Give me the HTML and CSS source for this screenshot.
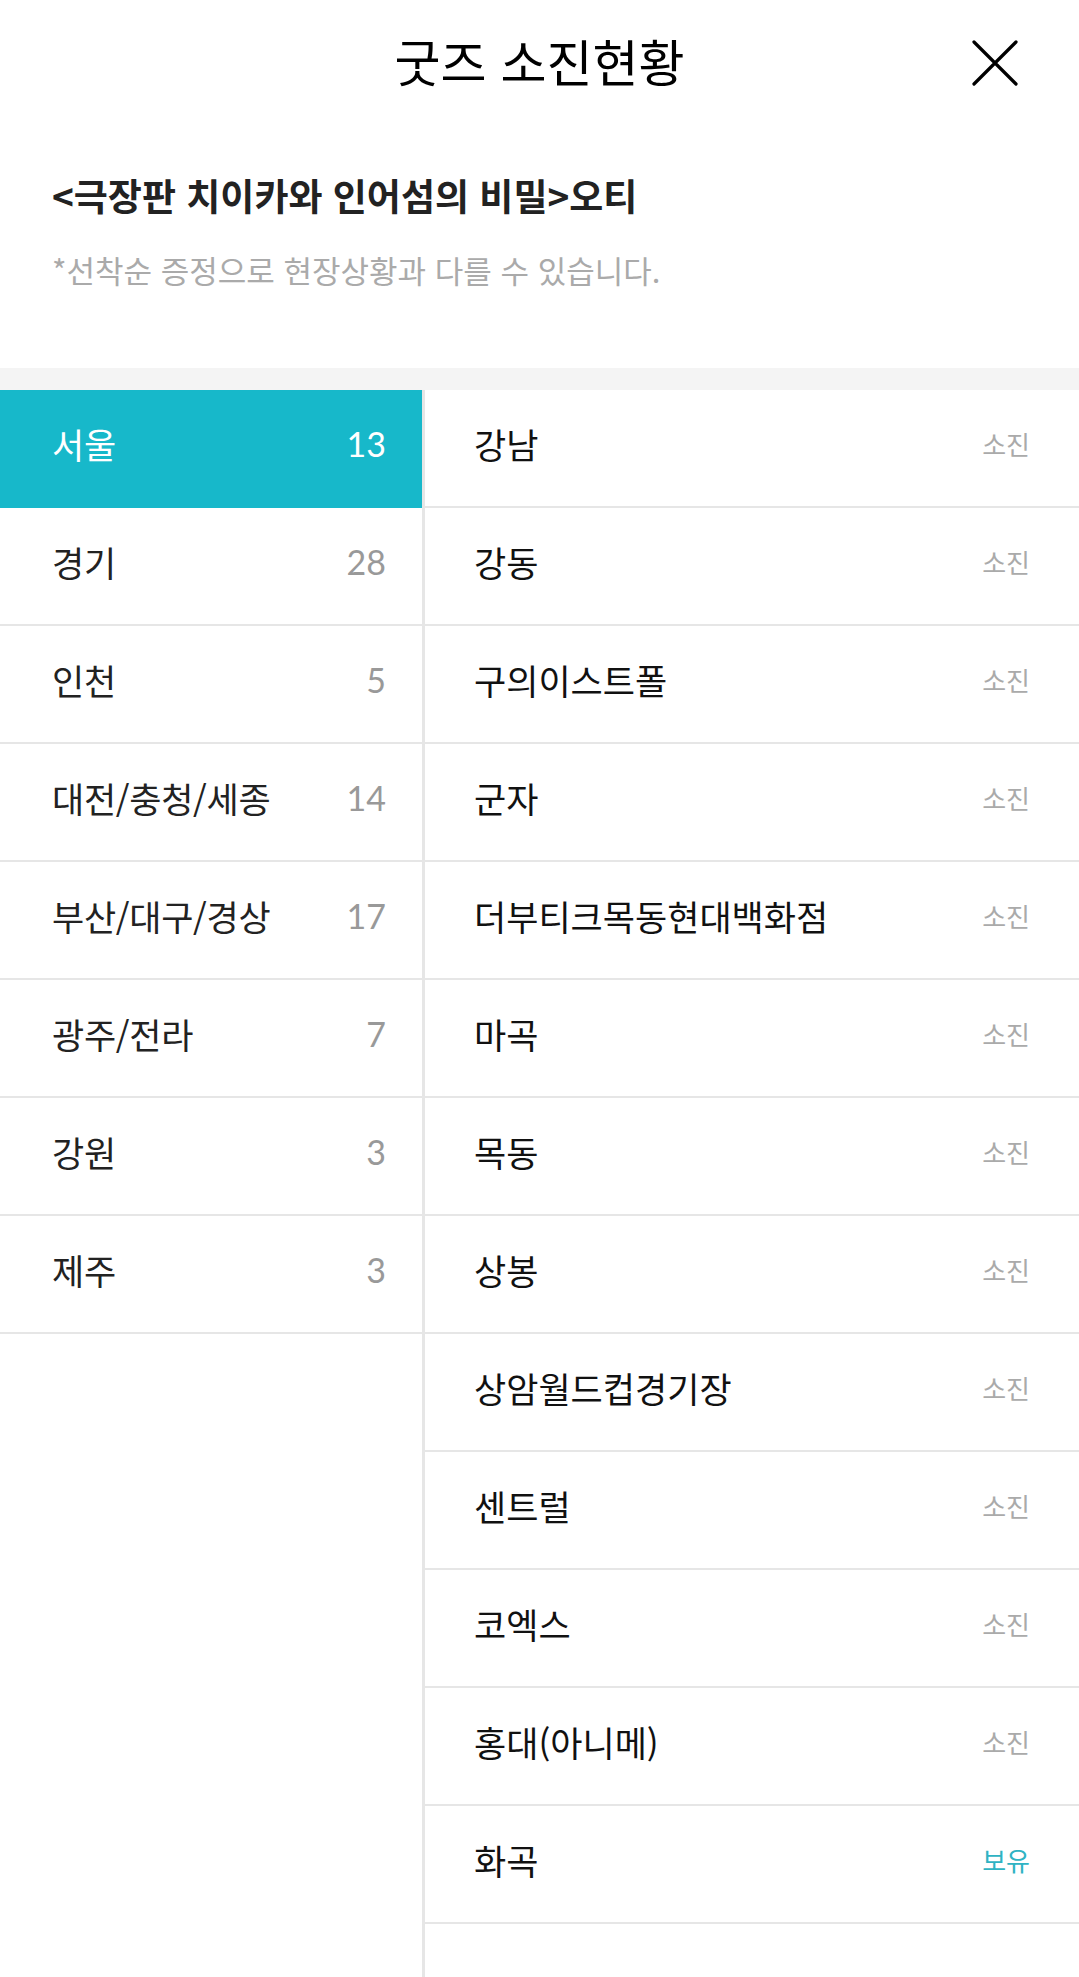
FILE: index.html
```html
<!DOCTYPE html>
<html lang="ko">
<head>
<meta charset="utf-8">
<title>굿즈 소진현황</title>
<link rel="stylesheet" href="styles.css">
</head>
<body>
<div class="page">
  <header class="header">
    <h1 class="title">굿즈 소진현황</h1>
    <button class="close" aria-label="닫기">
      <svg width="48" height="48" viewBox="0 0 48 48"><path d="M3 3 L45 45 M45 3 L3 45" stroke="#000" stroke-width="3.2" stroke-linecap="round" fill="none"/></svg>
    </button>
  </header>
  <section class="info">
    <h2 class="movie">&lt;극장판 치이카와 인어섬의 비밀&gt;오티</h2>
    <p class="note">*선착순 증정으로 현장상황과 다를 수 있습니다.</p>
  </section>
  <div class="band"></div>
  <div class="lists">
    <ul class="regions">
      <li class="region active"><span class="rname">서울</span><span class="rcount">13</span></li>
      <li class="region"><span class="rname">경기</span><span class="rcount">28</span></li>
      <li class="region"><span class="rname">인천</span><span class="rcount">5</span></li>
      <li class="region"><span class="rname">대전/충청/세종</span><span class="rcount">14</span></li>
      <li class="region"><span class="rname">부산/대구/경상</span><span class="rcount">17</span></li>
      <li class="region"><span class="rname">광주/전라</span><span class="rcount">7</span></li>
      <li class="region"><span class="rname">강원</span><span class="rcount">3</span></li>
      <li class="region"><span class="rname">제주</span><span class="rcount">3</span></li>
    </ul>
    <ul class="theaters">
      <li class="theater"><span class="tname">강남</span><span class="status">소진</span></li>
      <li class="theater"><span class="tname">강동</span><span class="status">소진</span></li>
      <li class="theater"><span class="tname">구의이스트폴</span><span class="status">소진</span></li>
      <li class="theater"><span class="tname">군자</span><span class="status">소진</span></li>
      <li class="theater"><span class="tname">더부티크목동현대백화점</span><span class="status">소진</span></li>
      <li class="theater"><span class="tname">마곡</span><span class="status">소진</span></li>
      <li class="theater"><span class="tname">목동</span><span class="status">소진</span></li>
      <li class="theater"><span class="tname">상봉</span><span class="status">소진</span></li>
      <li class="theater"><span class="tname">상암월드컵경기장</span><span class="status">소진</span></li>
      <li class="theater"><span class="tname">센트럴</span><span class="status">소진</span></li>
      <li class="theater"><span class="tname">코엑스</span><span class="status">소진</span></li>
      <li class="theater"><span class="tname">홍대(아니메)</span><span class="status">소진</span></li>
      <li class="theater"><span class="tname">화곡</span><span class="status avail">보유</span></li>
    </ul>
  </div>
</div>
</body>
</html>
```

FILE: styles.css
```css
* { box-sizing: border-box; }
html, body { margin: 0; padding: 0; background: #fff; }
body {
  font-family: "Noto Sans CJK KR", "Noto Sans", sans-serif;
  color: #111;
}
.page {
  min-height: 1977px;
  display: flex;
  flex-direction: column;
}
.header {
  position: relative;
  height: 126px;
  padding-bottom: 6px;
  display: flex;
  align-items: center;
  justify-content: center;
}
.title {
  margin: 0;
  font-size: 50px;
  font-weight: 400;
  letter-spacing: 0;
  line-height: 60px;
  color: #000;
}
.close {
  position: absolute;
  right: 60px;
  top: 39px;
  width: 48px;
  height: 48px;
  padding: 0;
  border: 0;
  background: none;
  display: flex;
}
.info {
  height: 242px;
  padding: 46px 52px 0;
}
.movie {
  margin: 0;
  font-size: 37px;
  font-weight: 700;
  line-height: 46px;
  letter-spacing: 0;
  color: #222;
}
.note {
  margin: 32px 0 0;
  font-size: 31px;
  line-height: 40px;
  letter-spacing: 0;
  color: #aaa;
}
.band {
  height: 22px;
  background: #f4f4f4;
}
.lists {
  flex: 1;
  display: flex;
}
ul { list-style: none; margin: 0; padding: 0; }
.regions {
  width: 422px;
  flex: none;
}
.region {
  height: 118px;
  border-bottom: 2px solid #e6e6e6;
  display: flex;
  align-items: center;
  justify-content: space-between;
  padding: 0 36px 9px 52px;
}
.region.active {
  background: #17b8ca;
  border-bottom-color: #17b8ca;
}
.rname {
  font-size: 35px;
  color: #222;
  letter-spacing: -0.3px;
}
.rcount {
  font-family: Lato, "Noto Sans", sans-serif;
  font-size: 34px;
  color: #999;
}
.region.active .rname,
.region.active .rcount { color: #fff; }
.theaters {
  flex: 1;
  border-left: 3px solid #e6e6e6;
}
.theater {
  height: 118px;
  border-bottom: 2px solid #e6e6e6;
  display: flex;
  align-items: center;
  justify-content: space-between;
  padding: 0 49px 9px 49px;
}
.tname {
  font-size: 35px;
  color: #111;
  letter-spacing: 0;
}
.status {
  font-size: 26px;
  color: #aaa;
}
.status.avail { color: #2fb3c3; }
```
